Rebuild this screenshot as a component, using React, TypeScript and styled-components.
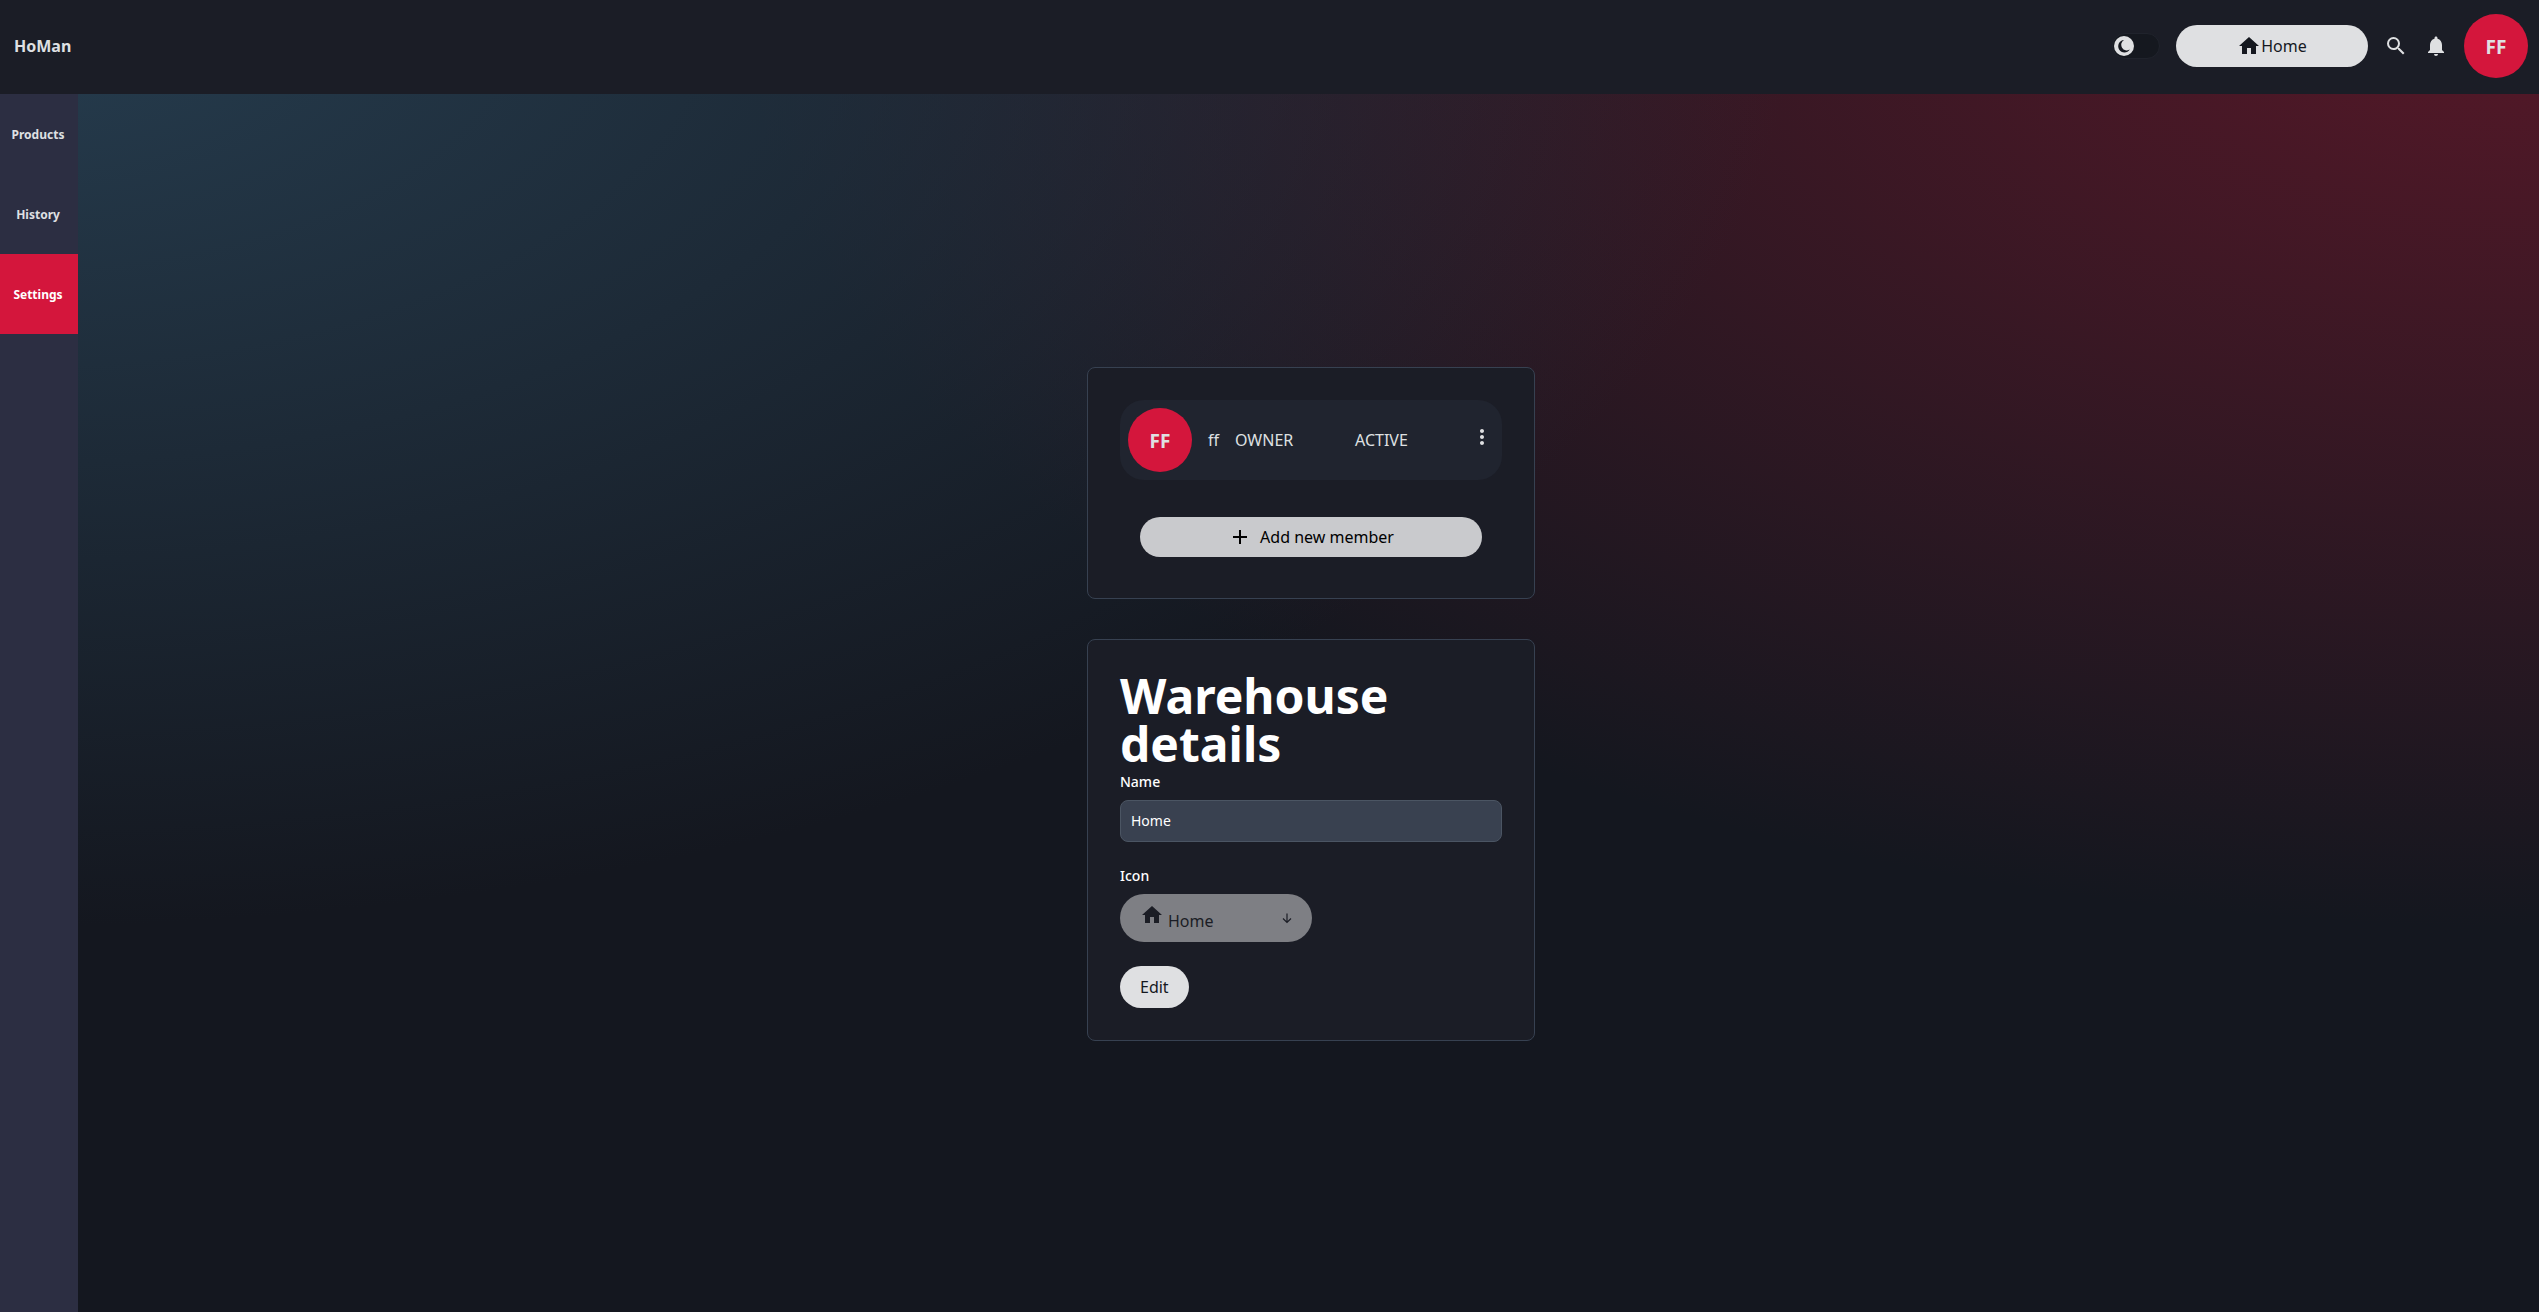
import React, { useState } from "react";
import styled, { createGlobalStyle } from "styled-components";
import { MdHome, MdSearch, MdNotifications, MdMoreVert, MdAdd } from "react-icons/md";

const GlobalStyle = createGlobalStyle`
  *, *::before, *::after { box-sizing: border-box; }
  body {
    margin: 0;
    font-family: "Noto Sans", "Open Sans", sans-serif;
    font-size: 16px;
    line-height: 24px;
    color: #dfe0e2;
    background: #14171f;
  }
  button, input, select { font: inherit; }
  h1, p, ul { margin: 0; padding: 0; }
  svg { display: block; flex: none; }
`;

const Page = styled.div`
  display: flex;
  flex-direction: column;
  min-height: 100vh;
  background:
    radial-gradient(at 0% 0%, #263d4f 0, transparent 50%),
    radial-gradient(at 100% 0%, #561828 0, transparent 50%),
    #14171f;
`;

const Header = styled.header`
  display: flex;
  align-items: center;
  justify-content: space-between;
  padding: 14px 11px 16px 14px;
  background: #1b1d26;
`;

const Brand = styled.a`
  color: inherit;
  font-weight: 700;
  text-decoration: none;
`;

const Tools = styled.div`
  display: flex;
  align-items: center;
  gap: 16px;
`;

const Avatar = styled.span`
  display: grid;
  place-items: center;
  flex: none;
  width: 64px;
  height: 64px;
  padding-top: 2px;
  border-radius: 50%;
  background: #d4163c;
  font-family: "Open Sans", "Noto Sans", sans-serif;
  font-size: 19px;
  font-weight: 700;
`;

const Switch = styled.label`
  display: flex;
  width: 48px;
  height: 26px;
  padding: 2px 1px;
  border: 1px solid #20232c;
  border-radius: 13px;
  background: #15181f;
  cursor: pointer;
`;

const SwitchInput = styled.input`
  appearance: none;
  display: block;
  width: 0;
  height: 0;
  margin: 0;
`;

const Knob = styled.span<{ $on: boolean }>`
  display: grid;
  place-items: center;
  width: 20px;
  height: 20px;
  margin-left: ${(p) => (p.$on ? "0" : "24px")};
  border-radius: 50%;
  background: #dfe0e2;
  color: #15181f;
`;

const Pill = styled.button<{ $wide?: boolean }>`
  display: flex;
  align-items: center;
  justify-content: center;
  width: ${(p) => (p.$wide ? "192px" : "auto")};
  height: 42px;
  padding: 0 20px;
  border: 0;
  border-radius: 21px;
  background: #dfe0e2;
  color: #15181f;
  cursor: pointer;
`;

const IconButton = styled.button`
  display: grid;
  place-items: center;
  padding: 0;
  border: 0;
  background: none;
  color: inherit;
  cursor: pointer;
`;

const Body = styled.div`
  display: flex;
  flex: 1;
`;

const Sidebar = styled.nav`
  flex: none;
  width: 78px;
  background: #2c2e42;
`;

const NavItem = styled.a<{ $active?: boolean }>`
  display: grid;
  place-items: center;
  height: 80px;
  padding: 2px 2px 0 0;
  background: ${(p) => (p.$active ? "#d4163c" : "transparent")};
  color: ${(p) => (p.$active ? "#ffffff" : "inherit")};
  font-size: 12px;
  font-weight: 700;
  text-decoration: none;
`;

const Main = styled.main`
  display: flex;
  flex: 1;
  flex-direction: column;
  align-items: center;
  justify-content: center;
  gap: 40px;
  padding: 2px 0 0 5px;
`;

const Card = styled.section`
  width: 100%;
  max-width: 448px;
  padding: 32px;
  border: 1px solid #374151;
  border-radius: 8px;
  background: #1b1d26;
`;

const Member = styled.div`
  display: flex;
  align-items: center;
  padding: 8px;
  border-radius: 24px;
  background: #20242f;
`;

const MemberName = styled.span`
  margin: 0 16px;
`;

const MemberRole = styled.span`
  flex: none;
  width: 120px;
`;

const MemberMenu = styled(IconButton)`
  margin: 0 0 6px auto;
`;

const AddButton = styled.button`
  display: flex;
  align-items: center;
  justify-content: center;
  gap: 8px;
  width: calc(100% - 40px);
  height: 40px;
  margin: 37px 20px 9px;
  border: 0;
  border-radius: 20px;
  background: #c9cacd;
  color: #000000;
  cursor: pointer;
`;

const Title = styled.h1`
  margin-bottom: 4px;
  color: #ffffff;
  font-size: 48px;
  font-weight: 700;
  line-height: 48px;
`;

const Form = styled.form`
  display: flex;
  flex-direction: column;
  align-items: flex-start;
  gap: 24px;
`;

const Field = styled.div`
  display: flex;
  flex-direction: column;
  gap: 8px;
  width: 100%;
`;

const Label = styled.label`
  color: #ffffff;
  font-size: 14px;
  font-weight: 500;
  line-height: 20px;
`;

const TextInput = styled.input`
  width: 100%;
  height: 42px;
  padding: 9px 10px 11px;
  border: 1px solid #4b5563;
  border-radius: 8px;
  background: #394150;
  color: #ffffff;
  font-size: 14px;
  line-height: 20px;
`;

const Picker = styled.button`
  display: flex;
  align-items: center;
  width: 192px;
  height: 48px;
  padding: 0 16px 0 20px;
  border: 0;
  border-radius: 24px;
  background: #7e7f84;
  color: #1b1d25;
`;

const PickerIcon = styled.span`
  margin-bottom: 6px;
`;

const PickerText = styled.span`
  flex: 1;
  padding: 6px 0 0 4px;
  text-align: left;
`;

const Moon = () => (
  <svg width="14" height="14" viewBox="0 0 14 14" fill="currentColor" aria-hidden="true">
    <path d="M7 .9A6.3 6.3 0 1 0 12.8 10.6 5.4 5.4 0 0 1 7 .9z" />
  </svg>
);

const ArrowDown = () => (
  <svg width="18" height="18" viewBox="0 0 18 18" fill="none" stroke="currentColor" strokeWidth="1.2" aria-hidden="true">
    <path d="M9 4.5v9M5 9.5l4 4 4-4" />
  </svg>
);

export default function App() {
  const [dark, setDark] = useState(true);
  const [name, setName] = useState("Home");
  return (
    <Page>
      <GlobalStyle />
      <Header>
        <Brand href="#">HoMan</Brand>
        <Tools>
          <Switch>
            <SwitchInput type="checkbox" aria-label="Dark mode" checked={dark} onChange={(e) => setDark(e.target.checked)} />
            <Knob $on={dark}><Moon /></Knob>
          </Switch>
          <Pill $wide type="button"><MdHome size={24} />Home</Pill>
          <IconButton type="button" aria-label="Search"><MdSearch size={24} /></IconButton>
          <IconButton type="button" aria-label="Notifications"><MdNotifications size={24} /></IconButton>
          <Avatar>FF</Avatar>
        </Tools>
      </Header>
      <Body>
        <Sidebar>
          <NavItem href="#products">Products</NavItem>
          <NavItem href="#history">History</NavItem>
          <NavItem href="#settings" $active>Settings</NavItem>
        </Sidebar>
        <Main>
          <Card>
            <Member>
              <Avatar>FF</Avatar>
              <MemberName>ff</MemberName>
              <MemberRole>OWNER</MemberRole>
              <span>ACTIVE</span>
              <MemberMenu type="button" aria-label="Member actions"><MdMoreVert size={24} /></MemberMenu>
            </Member>
            <AddButton type="button"><MdAdd size={24} />Add new member</AddButton>
          </Card>
          <Card>
            <Title>Warehouse details</Title>
            <Form onSubmit={(e) => e.preventDefault()}>
              <Field>
                <Label htmlFor="name">Name</Label>
                <TextInput id="name" value={name} onChange={(e) => setName(e.target.value)} />
              </Field>
              <Field>
                <Label htmlFor="icon">Icon</Label>
                <Picker id="icon" type="button" aria-haspopup="listbox" disabled>
                  <PickerIcon><MdHome size={24} /></PickerIcon>
                  <PickerText>Home</PickerText>
                  <ArrowDown />
                </Picker>
              </Field>
              <Pill type="submit">Edit</Pill>
            </Form>
          </Card>
        </Main>
      </Body>
    </Page>
  );
}
